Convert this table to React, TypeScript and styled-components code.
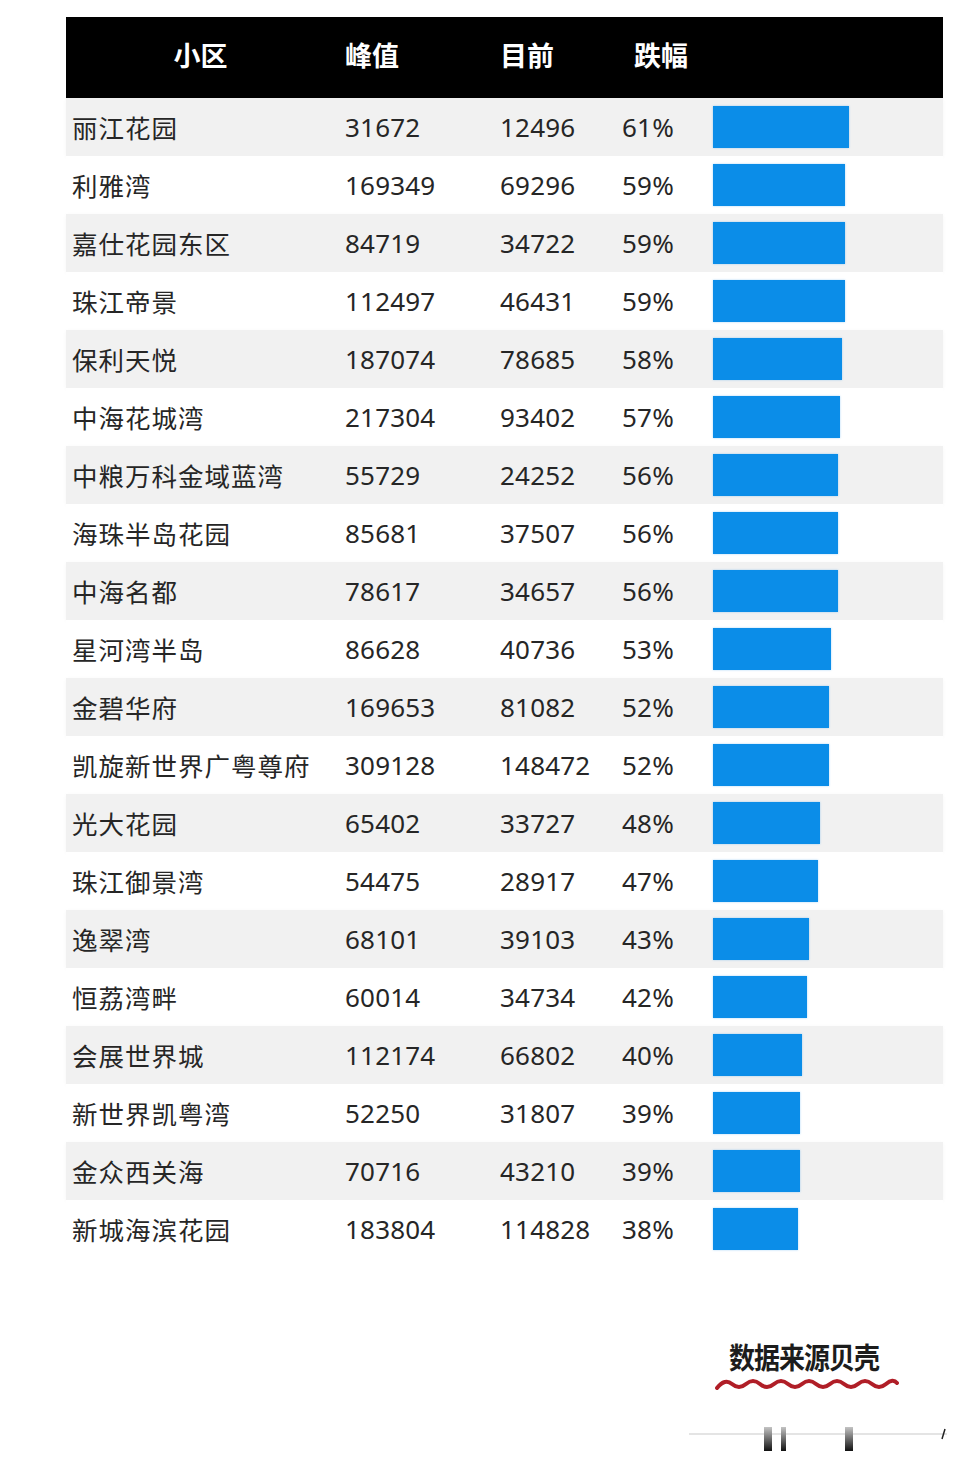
import styled, { createGlobalStyle } from "styled-components";

const GlobalStyle = createGlobalStyle`
  html, body {
    margin: 0;
    padding: 0;
    background: #ffffff;
  }
  body {
    font-family: "Noto Sans", "Noto Sans CJK SC", sans-serif;
  }
`;

const rows: [string, string, string, number][] = [
  ["丽江花园", "31672", "12496", 61],
  ["利雅湾", "169349", "69296", 59],
  ["嘉仕花园东区", "84719", "34722", 59],
  ["珠江帝景", "112497", "46431", 59],
  ["保利天悦", "187074", "78685", 58],
  ["中海花城湾", "217304", "93402", 57],
  ["中粮万科金域蓝湾", "55729", "24252", 56],
  ["海珠半岛花园", "85681", "37507", 56],
  ["中海名都", "78617", "34657", 56],
  ["星河湾半岛", "86628", "40736", 53],
  ["金碧华府", "169653", "81082", 52],
  ["凯旋新世界广粤尊府", "309128", "148472", 52],
  ["光大花园", "65402", "33727", 48],
  ["珠江御景湾", "54475", "28917", 47],
  ["逸翠湾", "68101", "39103", 43],
  ["恒荔湾畔", "60014", "34734", 42],
  ["会展世界城", "112174", "66802", 40],
  ["新世界凯粤湾", "52250", "31807", 39],
  ["金众西关海", "70716", "43210", 39],
  ["新城海滨花园", "183804", "114828", 38],
];

const Page = styled.div`
  width: 971px;
  height: 1471px;
  display: flex;
  flex-direction: column;
  padding-top: 17px;
  box-sizing: border-box;
  overflow: hidden;
`;

const Table = styled.div`
  margin-left: 66px;
  width: 877px;
  display: flex;
  flex-direction: column;
`;

const cols = "273px 155px 122px 91px 1fr";

const HeaderRow = styled.div`
  height: 81px;
  background: #000000;
  display: grid;
  grid-template-columns: ${cols};
  align-items: center;
  padding-left: 6px;
  box-sizing: border-box;
`;

const HeadCell = styled.div<{ $center?: boolean; $shift?: number }>`
  color: #ffffff;
  font-family: "Noto Sans CJK SC", sans-serif;
  font-weight: 700;
  font-size: 27px;
  text-align: ${(p) => (p.$center ? "center" : "left")};
  padding-left: ${(p) => p.$shift ?? 0}px;
  padding-right: ${(p) => (p.$center ? 16 : 0)}px;
  line-height: 1;
  margin-top: -6px;
`;

const Row = styled.div<{ $shade: boolean }>`
  height: 58px;
  background: ${(p) => (p.$shade ? "#f1f1f1" : "#ffffff")};
  display: grid;
  grid-template-columns: ${cols};
  align-items: center;
  padding-left: 6px;
  box-sizing: border-box;
  box-shadow: ${(p) => (p.$shade ? "0 1px 4px rgba(0,0,0,0.04)" : "none")};
`;

const Cell = styled.div`
  color: #262626;
  font-size: 26px;
  line-height: 1;
  white-space: nowrap;
  letter-spacing: 0.2px;
`;

const NameCell = styled(Cell)`
  font-family: "Noto Sans CJK SC", sans-serif;
  font-size: 25.5px;
  letter-spacing: 1px;
`;

const BarCell = styled.div`
  display: flex;
  align-items: center;
  height: 100%;
`;

const Bar = styled.div`
  height: 42px;
  background: #0b8de8;
  box-shadow: 0 0 2px rgba(11, 141, 232, 0.35);
`;

const Footer = styled.div`
  display: flex;
  flex-direction: column;
  align-items: flex-end;
  padding-right: 71px;
  margin-top: 80px;
`;

const Source = styled.div`
  font-family: "Noto Sans CJK SC", sans-serif;
  font-weight: 700;
  font-size: 26px;
  color: #1c1c1c;
  letter-spacing: -1px;
  transform: scaleY(1.12);
  margin-right: 21px;
`;

const Wave = styled.svg`
  display: block;
  margin-top: 0;
`;

const Artifact = styled.svg`
  display: block;
  margin-top: 32px;
  margin-right: -49px;
`;

export default function App() {
  return (
    <Page>
      <GlobalStyle />
      <Table>
        <HeaderRow>
          <HeadCell $center>小区</HeadCell>
          <HeadCell>峰值</HeadCell>
          <HeadCell>目前</HeadCell>
          <HeadCell $shift={12}>跌幅</HeadCell>
          <div />
        </HeaderRow>
        {rows.map(([name, peak, now, pct], i) => (
          <Row key={name} $shade={i % 2 === 0}>
            <NameCell>{name}</NameCell>
            <Cell>{peak}</Cell>
            <Cell>{now}</Cell>
            <Cell>{pct}%</Cell>
            <BarCell>
              <Bar style={{ width: `${Math.round(pct * 2.23)}px` }} />
            </BarCell>
          </Row>
        ))}
      </Table>
      <Footer>
        <Source>数据来源贝壳</Source>
        <Wave width="186" height="18" viewBox="0 0 186 18">
          <path
            d="M3 13 Q11 3 18 9 T32 9 T46 9 T60 9 T74 9 T88 9 T102 9 T116 9 T130 9 T144 9 T158 9 T172 9 T183 8"
            fill="none"
            stroke="#b01e27"
            strokeWidth="4"
            strokeLinecap="round"
          />
        </Wave>
        <Artifact width="260" height="28" viewBox="0 0 260 28">
          <defs>
            <linearGradient id="mk" x1="0" y1="0" x2="0" y2="1">
              <stop offset="0" stopColor="#c4c4c4" />
              <stop offset="1" stopColor="#111111" />
            </linearGradient>
          </defs>
          <rect x="0" y="8" width="258" height="2" fill="#e4e4e4" />
          <rect x="75" y="2" width="8" height="24" fill="url(#mk)" />
          <rect x="92" y="2" width="5" height="24" fill="url(#mk)" />
          <rect x="156" y="2" width="8" height="24" fill="url(#mk)" />
          <path d="M256 4 L253 14" stroke="#222" strokeWidth="1.5" />
        </Artifact>
      </Footer>
    </Page>
  );
}
